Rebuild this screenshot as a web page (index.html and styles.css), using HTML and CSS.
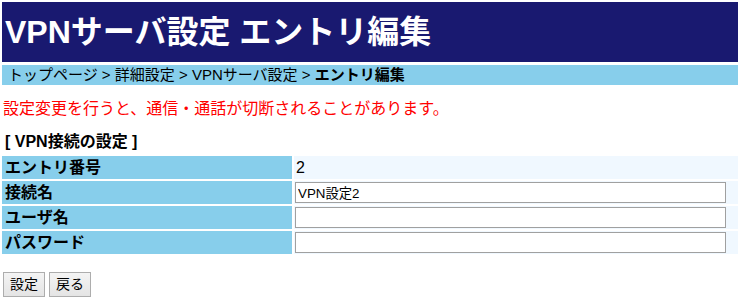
FILE: index.html
```html
<!DOCTYPE html>
<html lang="ja">
<head>
<meta charset="utf-8">
<title>VPNサーバ設定 エントリ編集</title>
<link rel="stylesheet" href="styles.css">
</head>
<body>
<h1 class="page-title">VPNサーバ設定 エントリ編集</h1>
<div class="breadcrumb">トップページ &gt; 詳細設定 &gt; VPNサーバ設定 &gt; <b>エントリ編集</b></div>
<p class="warning">設定変更を行うと、通信・通話が切断されることがあります。</p>
<div class="section-title">[ VPN接続の設定 ]</div>
<table class="form-table">
  <tr><th>エントリ番号</th><td class="val-text">2</td></tr>
  <tr><th>接続名</th><td><input class="text-input" type="text" value="VPN設定2"></td></tr>
  <tr><th>ユーザ名</th><td><input class="text-input" type="text" value=""></td></tr>
  <tr><th>パスワード</th><td><input class="text-input" type="password" value=""></td></tr>
</table>
<div class="buttons">
  <button class="btn" type="button">設定</button>
  <button class="btn" type="button">戻る</button>
</div>
</body>
</html>
```
FILE: styles.css
```css
html, body {
  margin: 0;
  padding: 0;
  background: #ffffff;
}
body {
  font-family: "Liberation Sans", Arial, "Noto Sans CJK JP", sans-serif;
  color: #000000;
}
.page-title {
  margin: 2px 2px 0 2px;
  height: 60px;
  line-height: 60px;
  padding-left: 3px;
  background: #191970;
  color: #ffffff;
  font-size: 32px;
  font-weight: bold;
}
.breadcrumb {
  margin: 3px 2px 0 2px;
  height: 20px;
  line-height: 20px;
  padding-left: 6px;
  background: #87ceeb;
  font-size: 15px;
  color: #000000;
}
.breadcrumb b {
  font-weight: bold;
}
.warning {
  margin: 14px 0 0 3px;
  line-height: 20px;
  font-size: 16px;
  color: #ff0000;
}
.section-title {
  margin: 13px 0 0 5px;
  line-height: 20px;
  font-size: 16px;
  font-weight: bold;
}
.form-table {
  margin-top: 2px;
  width: 100%;
  border-collapse: separate;
  border-spacing: 2px;
}
.form-table th {
  width: 287px;
  height: 23px;
  padding: 0 0 0 3px;
  background: #87ceeb;
  text-align: left;
  font-size: 16px;
  font-weight: bold;
  line-height: 20px;
}
.form-table td {
  height: 23px;
  padding: 0 1px;
  background: #f0f8ff;
  font-size: 16px;
  line-height: 20px;
}
.form-table td.val-text {
  padding-left: 2px;
}
.text-input {
  display: block;
  box-sizing: border-box;
  width: 431px;
  height: 21px;
  margin: 0;
  padding: 0 2px;
  border: 1px solid #a0a0a0;
  background: #ffffff;
  font-family: "Liberation Sans", Arial, "Noto Sans CJK JP", sans-serif;
  font-size: 13.33px;
  color: #000000;
}
.buttons {
  display: flex;
  gap: 4px;
  margin: 16px 0 0 3px;
}
.btn {
  box-sizing: border-box;
  min-width: 42px;
  height: 25px;
  padding: 0 5px;
  border: 1px solid #adadad;
  border-radius: 0;
  background: linear-gradient(#f4f4f4, #e4e4e4);
  font-family: "Liberation Sans", Arial, "Noto Sans CJK JP", sans-serif;
  font-size: 14px;
  line-height: 17px;
  color: #000000;
}
```
